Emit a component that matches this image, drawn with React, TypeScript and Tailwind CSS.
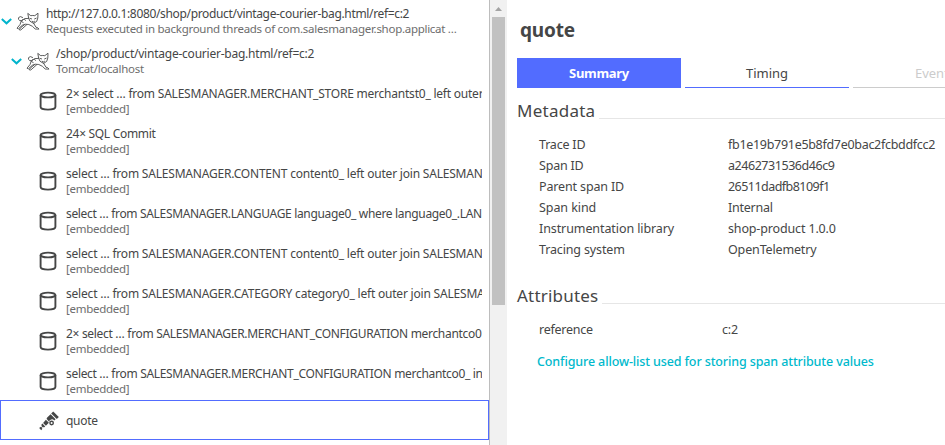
import React from 'react';

function Chevron() {
  return (
    <svg className="h-[7px] w-[11px] shrink-0" viewBox="0 0 11 7" fill="none" stroke="#00b4cc" strokeWidth="2">
      <path d="M.8 1 5.5 5.3 10.2 1" />
    </svg>
  );
}

function Tomcat() {
  return (
    <svg className="h-[20px] w-[24px] shrink-0" viewBox="0 0 24 20" fill="none" stroke="#4b4c4c" strokeWidth=".9" strokeLinejoin="round" strokeLinecap="round">
      <path d="M12.6 5.8 11.8 1.4l3 2.3q2-.5 4 0l3.2-2.5-.2 4.8-1.1 3.4-3.2 2-3.2-2Z" />
      <path d="m14 6.4 1.6.5M20.2 6.2l-1.6.7M16.2 9.3l1.2.6 1.1-.6" />
      <path d="M12.5 6.4 8.6 6.6 5.6 9M6.6 5.4Q4 3.6 2.6 5.6q-.8 2 1.2 3 2.4.8 3.2-1.2" />
      <path d="M5.2 9.2 4 12.6 1 16.2l1.4.6 4-3.6 2.8-1 3.6.3 3.6 1.8 2.8 2.7 3.8.1-1.4-1.5-1.6-.3-2.6-4.4M8.4 12.8 4.8 15.6l-1.6 2.2 1.6.2 5.8-5.2" />
      <path d="m8.4 7.2 1 1.2M5.8 9.7l1.4.8" />
    </svg>
  );
}

function Database() {
  return (
    <svg className="h-[20px] w-[18px] shrink-0" viewBox="0 0 18 20" fill="none" stroke="#454646" strokeWidth="1.9">
      <ellipse cx="9" cy="4" rx="7.4" ry="2.4" />
      <path d="M1.6 4v12c0 1.5 3.3 2.6 7.4 2.6s7.4-1.1 7.4-2.6V4" />
    </svg>
  );
}

function Telescope() {
  return (
    <svg className="h-[20px] w-[20px] shrink-0" viewBox="0 0 20 20" fill="#454646">
      <path d="M14.2.4 19.8 6l-2 2-5.6-5.6Z" />
      <path d="m11.6 3.2 5 5-1.4 1.2q-1.2-1.4-3-.9-1.8.5-2.1 2.2L7.7 8.1q-.3-.9.5-1.6Z" />
      <path d="m6.9 8.7 3 3-3 3-2.8-2.8Z" />
      <path d="m3.4 12.6 2.8 2.8-1.3 1.1-1-.8-1.2 1.4.7.7-1.2 1.4L.2 17l1.4-1.2.6.6.8-1.2-.8-1.1Z" />
      <circle cx="12.6" cy="12" r="1.7" fill="white" stroke="#454646" strokeWidth="1.4" />
    </svg>
  );
}

const queries = [
  { text: '2× select … from SALESMANAGER.MERCHANT_STORE merchantst0_ left outer', cls: 'tracking-[-0.22px]' },
  { text: '24× SQL Commit', cls: 'tracking-[-0.3px]' },
  { text: 'select … from SALESMANAGER.CONTENT content0_ left outer join SALESMAN', cls: 'tracking-[-0.2px]' },
  { text: 'select … from SALESMANAGER.LANGUAGE language0_ where language0_.LAN', cls: 'tracking-[-0.33px]' },
  { text: 'select … from SALESMANAGER.CONTENT content0_ left outer join SALESMAN', cls: 'tracking-[-0.2px]' },
  { text: 'select … from SALESMANAGER.CATEGORY category0_ left outer join SALESMA', cls: 'tracking-[-0.2px]' },
  { text: '2× select … from SALESMANAGER.MERCHANT_CONFIGURATION merchantco0', cls: 'tracking-[-0.31px]' },
  { text: 'select … from SALESMANAGER.MERCHANT_CONFIGURATION merchantco0_ in', cls: 'tracking-[-0.32px]' },
];

const metadata = [
  { label: 'Trace ID', value: 'fb1e19b791e5b8fd7e0bac2fcbddfcc2', l: 'tracking-[-0.2px]', v: 'tracking-[-0.3px]' },
  { label: 'Span ID', value: 'a2462731536d46c9', l: 'tracking-[-0.2px]', v: 'tracking-[-0.45px]' },
  { label: 'Parent span ID', value: '26511dadfb8109f1', l: 'tracking-[-0.14px]', v: 'tracking-[-0.54px]' },
  { label: 'Span kind', value: 'Internal', l: 'tracking-[-0.08px]', v: 'tracking-[-0.25px]' },
  { label: 'Instrumentation library', value: 'shop-product 1.0.0', l: 'tracking-[-0.09px]', v: 'tracking-[-0.15px]' },
  { label: 'Tracing system', value: 'OpenTelemetry', l: 'tracking-[-0.14px]', v: 'tracking-[-0.15px]' },
];

function Section({ title, cls }: { title: string; cls: string }) {
  return (
    <div className="flex h-6 items-center">
      <h2 className={`text-[17px] leading-6 whitespace-nowrap ${cls}`}>{title}</h2>
      <div className="mt-[14px] ml-1 h-px flex-1 bg-[#e6e6e6]" />
    </div>
  );
}

function SubText({ children }: { children: React.ReactNode }) {
  return <div className="-mt-px text-[11.5px] leading-4 tracking-[-0.28px] text-[#6d6d6d]">{children}</div>;
}

export default function App() {
  return (
    <div className="flex h-[445px] w-[945px] overflow-hidden bg-white font-['Noto_Sans',sans-serif] text-[#454646]">
      <div className="h-full w-[489px] shrink-0 text-[12px] leading-4 whitespace-nowrap">
        <div className="flex h-10 pt-[5px] pl-px">
          <div className="flex h-8 items-center gap-1 pt-px"><Chevron /><Tomcat /></div>
          <div className="mt-px ml-[6px]">
            <div className="tracking-[-0.34px]">http://127.0.0.1:8080/shop/product/vintage-courier-bag.html/ref=c:2</div>
            <SubText>Requests executed in background threads of com.salesmanager.shop.applicat …</SubText>
          </div>
        </div>
        <div className="flex h-10 pt-[5px] pl-[11px]">
          <div className="flex h-8 items-center gap-1 pt-px"><Chevron /><Tomcat /></div>
          <div className="mt-px ml-[6px]">
            <div className="tracking-[-0.23px]">/shop/product/vintage-courier-bag.html/ref=c:2</div>
            <SubText>Tomcat/localhost</SubText>
          </div>
        </div>
        {queries.map((q, i) => (
          <div key={i} className="flex h-10 pt-[5px] pr-[7px] pl-[39px]">
            <div className="flex h-8 items-center"><Database /></div>
            <div className="mt-px ml-[9px] min-w-0 flex-1 overflow-hidden">
              <div className={q.cls}>{q.text}</div>
              <SubText>[embedded]</SubText>
            </div>
          </div>
        ))}
        <div className="flex h-10 items-center border border-[#526cff] pt-[2px] pl-[38px]">
          <Telescope />
          <span className="ml-[7px] tracking-[-0.3px]">quote</span>
        </div>
      </div>
      <div className="flex w-[18px] shrink-0 flex-col items-center border-l border-[#bdbdbd] bg-[#f1f1f1]">
        <div className="flex h-[17px] items-center">
          <svg className="h-[4px] w-[7px]" viewBox="0 0 7 4" fill="#a3a3a3"><path d="M3.5 0 7 4H0Z" /></svg>
        </div>
        <div className="h-[288px] w-[13px] bg-[#c1c1c1]" />
      </div>
      <div className="min-w-0 flex-1 overflow-hidden pl-[10px] whitespace-nowrap">
        <h1 className="mt-[18px] ml-[3px] text-[19px] leading-6 font-bold tracking-[-0.2px]">quote</h1>
        <div className="mt-4 flex h-[30px] w-[500px] gap-1 text-center text-[13px] leading-[30px]">
          <div className="w-[164px] shrink-0 bg-[#526cff] font-bold tracking-[-0.3px] text-white">Summary</div>
          <div className="w-[164px] shrink-0 border-b border-[#526cff]">Timing</div>
          <div className="w-[164px] shrink-0 border-b border-[#cccccc] text-[#cccccc]">Events</div>
        </div>
        <div className="mt-[11px]"><Section title="Metadata" cls="tracking-[0.25px]" /></div>
        <div className="mt-[11px] pl-[22px] text-[12.5px] leading-[21px]">
          {metadata.map((m) => (
            <div key={m.label} className="flex">
              <div className="w-[189px] shrink-0"><span className={m.l}>{m.label}</span></div>
              <div><span className={m.v}>{m.value}</span></div>
            </div>
          ))}
        </div>
        <div className="mt-6"><Section title="Attributes" cls="tracking-[0.2px]" /></div>
        <div className="mt-[11px] flex pl-[22px] text-[12.5px] leading-[21px]">
          <div className="w-[183px] shrink-0 tracking-[-0.25px]">reference</div>
          <div className="tracking-[-0.2px]">c:2</div>
        </div>
        <div className="mt-[11px] pl-5 text-[12.5px] leading-[21px] font-medium tracking-[-0.12px] text-[#00b9cc]">
          Configure allow-list used for storing span attribute values
        </div>
      </div>
    </div>
  );
}
